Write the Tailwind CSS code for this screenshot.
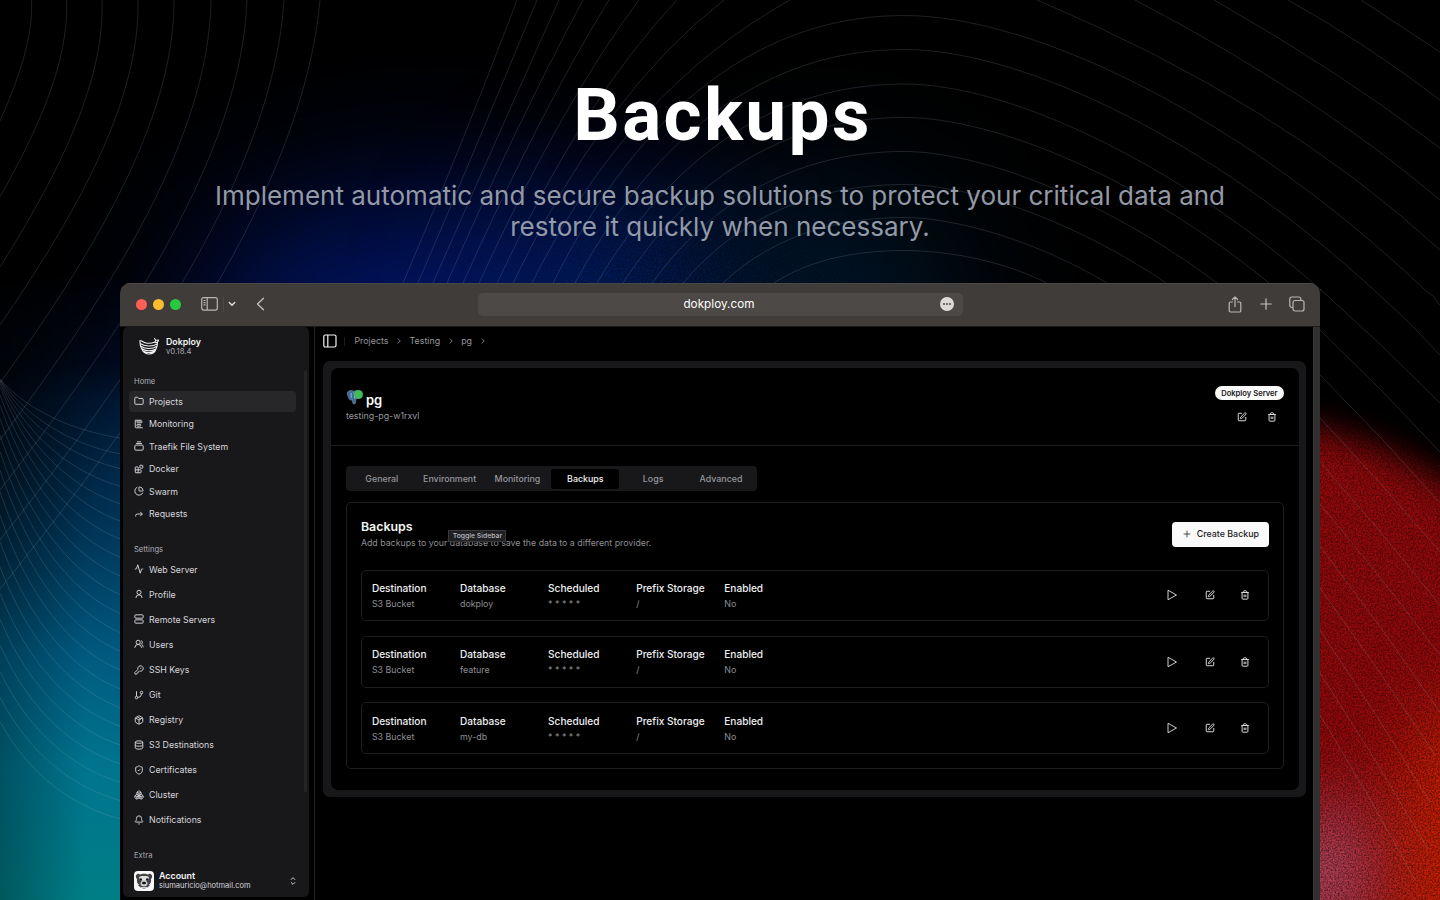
<!DOCTYPE html>
<html lang="en">
<head>
<meta charset="utf-8">
<title>Dokploy Backups</title>
<script src="https://cdn.jsdelivr.net/npm/@tailwindcss/browser@4"></script>
</head>
<body class="w-[1440px] h-[900px] overflow-hidden bg-black font-['Inter',sans-serif] text-white">
<svg width="0" height="0" class="absolute">
<defs>
<symbol id="folder" viewBox="0 0 24 24"><path d="M20 20a2 2 0 0 0 2-2V8a2 2 0 0 0-2-2h-7.9a2 2 0 0 1-1.69-.9L9.6 3.9A2 2 0 0 0 7.930 3H4a2 2 0 0 0-2 2v13a2 2 0 0 0 2 2Z"/></symbol>
<symbol id="chart" viewBox="0 0 24 24"><path d="M3 3v16a2 2 0 0 0 2 2h16M3 3h15"/><rect x="7" y="13" width="9" height="4" rx="1"/><rect x="7" y="5" width="12" height="4" rx="1"/></symbol>
<symbol id="stack" viewBox="0 0 24 24"><path d="M7 2h10M5 6h14"/><rect width="20" height="12" x="2" y="10" rx="2"/></symbol>
<symbol id="blocks" viewBox="0 0 24 24"><rect width="7" height="7" x="14" y="3" rx="1"/><path d="M10 21V8a1 1 0 0 0-1-1H4a1 1 0 0 0-1 1v12a1 1 0 0 0 1 1h12a1 1 0 0 0 1-1v-5a1 1 0 0 0-1-1H3"/></symbol>
<symbol id="pie" viewBox="0 0 24 24"><path d="M21 12c.552 0 1.005-.449.950-.998a10 10 0 0 0-8.953-8.951c-.55-.055-.998.398-.998.950v8a1 1 0 0 0 1 1z"/><path d="M21.210 15.890A10 10 0 1 1 8 2.830"/></symbol>
<symbol id="forward" viewBox="0 0 24 24"><path d="m15 17 5-5-5-5"/><path d="M4 18v-2a4 4 0 0 1 4-4h12"/></symbol>
<symbol id="activity" viewBox="0 0 24 24"><path d="M22 12h-2.480a2 2 0 0 0-1.930 1.460l-2.350 8.360a.25.25 0 0 1-.48 0L9.240 2.180a.25.25 0 0 0-.48 0l-2.350 8.360A2 2 0 0 1 4.490 12H2"/></symbol>
<symbol id="user" viewBox="0 0 24 24"><circle cx="12" cy="8" r="5"/><path d="M4.500 21.500a7.500 7.500 0 0 1 15 0"/></symbol>
<symbol id="server" viewBox="0 0 24 24"><rect width="20" height="8" x="2" y="2" rx="2"/><rect width="20" height="8" x="2" y="14" rx="2"/><path d="M6 6h.01M6 18h.01"/></symbol>
<symbol id="users" viewBox="0 0 24 24"><path d="M18 21a8 8 0 0 0-16 0"/><circle cx="10" cy="8" r="5"/><path d="M22 20c0-3.370-2-6.500-4-8a5 5 0 0 0-.45-8.300"/></symbol>
<symbol id="key" viewBox="0 0 24 24"><path d="M2.586 17.414A2 2 0 0 0 2 18.828V21a1 1 0 0 0 1 1h3a1 1 0 0 0 1-1v-1a1 1 0 0 1 1-1h1a1 1 0 0 0 1-1v-1a1 1 0 0 1 1-1h.172a2 2 0 0 0 1.414-.586l.814-.814a6.500 6.500 0 1 0-4-4z"/><circle cx="16.500" cy="7.500" r=".5"/></symbol>
<symbol id="git" viewBox="0 0 24 24"><path d="M6 3v12"/><circle cx="18" cy="6" r="3"/><circle cx="6" cy="18" r="3"/><path d="M18 9a9 9 0 0 1-9 9"/></symbol>
<symbol id="package" viewBox="0 0 24 24"><path d="M11 21.730a2 2 0 0 0 2 0l7-4A2 2 0 0 0 21 16V8a2 2 0 0 0-1-1.730l-7-4a2 2 0 0 0-2 0l-7 4A2 2 0 0 0 3 8v8a2 2 0 0 0 1 1.730zM12 22V12M3.300 7 12 12l8.700-5M7.500 4.270l9 5.150"/></symbol>
<symbol id="database" viewBox="0 0 24 24"><ellipse cx="12" cy="5" rx="9" ry="3"/><path d="M3 5v14a9 3 0 0 0 18 0V5M3 12a9 3 0 0 0 18 0"/></symbol>
<symbol id="shield" viewBox="0 0 24 24"><path d="M20 13c0 5-3.500 7.500-7.660 8.950a1 1 0 0 1-.67-.01C7.500 20.500 4 18 4 13V6a1 1 0 0 1 1-1c2 0 4.500-1.200 6.240-2.720a1.170 1.170 0 0 1 1.520 0C14.510 3.810 17 5 19 5a1 1 0 0 1 1 1z"/><path d="m9 12 2 2 4-4"/></symbol>
<symbol id="boxes" viewBox="0 0 24 24"><path d="M2.970 12.920A2 2 0 0 0 2 14.630v3.240a2 2 0 0 0 .97 1.710l3 1.800a2 2 0 0 0 2.060 0L12 19v-5.500l-5-3zM7 16.500l-4.740-2.850M7 16.500l5-3M7 16.500v5.170M12 13.500V19l3.970 2.380a2 2 0 0 0 2.060 0l3-1.800a2 2 0 0 0 .97-1.710v-3.240a2 2 0 0 0-.97-1.710L17 10.500zM17 16.500l-5-3M17 16.500l4.740-2.850M17 16.500v5.170M7.970 4.420A2 2 0 0 0 7 6.130v4.370l5 3 5-3V6.130a2 2 0 0 0-.97-1.710l-3-1.800a2 2 0 0 0-2.060 0zM12 8 7.260 5.150M12 8l4.740-2.850M12 13.500V8"/></symbol>
<symbol id="bell" viewBox="0 0 24 24"><path d="M10.268 21a2 2 0 0 0 3.464 0M3.262 15.326A1 1 0 0 0 4 17h16a1 1 0 0 0 .74-1.673C19.410 13.956 18 12.499 18 8A6 6 0 0 0 6 8c0 4.499-1.411 5.956-2.738 7.326"/></symbol>
<symbol id="chev" viewBox="0 0 24 24"><path d="m9 18 6-6-6-6"/></symbol>
<symbol id="updown" viewBox="0 0 24 24"><path d="m7 15 5 5 5-5M7 9l5-5 5 5"/></symbol>
<symbol id="edit" viewBox="0 0 24 24"><path d="M12 3H5a2 2 0 0 0-2 2v14a2 2 0 0 0 2 2h14a2 2 0 0 0 2-2v-7"/><path d="M18.375 2.625a1 1 0 0 1 3 3l-9.013 9.014a2 2 0 0 1-.853.505l-2.873.84a.5.5 0 0 1-.62-.62l.84-2.873a2 2 0 0 1 .506-.852z"/></symbol>
<symbol id="trash" viewBox="0 0 24 24"><path d="M3 6h18M19 6v14a2 2 0 0 1-2 2H7a2 2 0 0 1-2-2V6M8 6V4a2 2 0 0 1 2-2h4a2 2 0 0 1 2 2v2M10 11v6M14 11v6"/></symbol>
<symbol id="play" viewBox="0 0 24 24"><path d="M4 2.500 21 12 4 21.500z"/></symbol>
<symbol id="plus" viewBox="0 0 24 24"><path d="M4 12h16M12 4v16"/></symbol>
</defs>
</svg>

<!-- Backdrop: colour glows, grain and contour lines -->
<svg class="absolute inset-0" width="1440" height="900" viewBox="0 0 1440 900">
<defs>
<filter id="b60" x="-100%" y="-150%" width="300%" height="400%" color-interpolation-filters="sRGB"><feGaussianBlur stdDeviation="76"/></filter>
<filter id="b30" x="-100%" y="-100%" width="300%" height="300%" color-interpolation-filters="sRGB"><feGaussianBlur stdDeviation="36"/></filter>
<filter id="b14" x="-50%" y="-50%" width="200%" height="200%" color-interpolation-filters="sRGB"><feGaussianBlur stdDeviation="17"/></filter>
<filter id="grain" x="0" y="0" width="100%" height="100%" color-interpolation-filters="sRGB"><feTurbulence type="fractalNoise" baseFrequency="0.6" numOctaves="3" seed="4"/><feColorMatrix values="0 0 0 0 0  0 0 0 0 0  0 0 0 0 0  2 0 0 0 -0.62"/></filter>
<linearGradient id="teal" x1="0" y1="360" x2="0" y2="900" gradientUnits="userSpaceOnUse"><stop offset="0" stop-color="#000d26"/><stop offset=".3" stop-color="#00365a"/><stop offset=".55" stop-color="#005a80"/><stop offset=".75" stop-color="#00748e"/><stop offset="1" stop-color="#007e86"/></linearGradient>
<linearGradient id="tealv" x1="0" x2="1"><stop offset="0" stop-color="#000" stop-opacity=".3"/><stop offset=".7" stop-color="#000" stop-opacity="0"/></linearGradient>
<linearGradient id="tealt" x1="0" x2="1"><stop offset="0" stop-color="#000" stop-opacity=".55"/><stop offset="1" stop-color="#000" stop-opacity="0"/></linearGradient>
<linearGradient id="tealm" x1="0" y1="270" x2="0" y2="400" gradientUnits="userSpaceOnUse"><stop offset="0" stop-color="#000"/><stop offset="1" stop-color="#fff"/></linearGradient>
<linearGradient id="tealn" x1="0" y1="400" x2="0" y2="650" gradientUnits="userSpaceOnUse"><stop offset="0" stop-color="#fff"/><stop offset="1" stop-color="#000"/></linearGradient>
<mask id="mt"><rect y="250" width="124" height="650" fill="url(#tealm)"/></mask>
<mask id="mn"><rect y="250" width="124" height="650" fill="url(#tealn)"/></mask>
<radialGradient id="gm"><stop offset="0" stop-color="#fff"/><stop offset="1" stop-color="#000"/></radialGradient>
<mask id="mg"><ellipse cx="680" cy="320" rx="250" ry="190" fill="url(#gm)"/></mask>
</defs>
<rect width="1440" height="900" fill="#000"/>
<ellipse cx="425" cy="335" rx="235" ry="135" fill="#001464" filter="url(#b60)"/>
<ellipse cx="640" cy="330" rx="130" ry="110" fill="#00267a" filter="url(#b60)"/>
<ellipse cx="820" cy="310" rx="130" ry="110" fill="#001a30" filter="url(#b60)"/>
<rect x="430" y="120" width="540" height="180" filter="url(#grain)" mask="url(#mg)" opacity=".7"/>
<g mask="url(#mt)"><rect y="250" width="124" height="650" fill="url(#teal)"/><rect y="250" width="124" height="650" fill="url(#tealv)"/><rect y="250" width="124" height="650" fill="url(#tealt)" mask="url(#mn)"/></g>
<path d="M1240 412 L1320 430 Q1400 448 1480 505 V980 H1240Z" fill="#960a0c" filter="url(#b14)"/>
<ellipse cx="1465" cy="890" rx="75" ry="190" fill="#d02206" filter="url(#b30)"/>
<ellipse cx="1325" cy="875" rx="40" ry="76" fill="#c05878" filter="url(#b30)"/>
<rect x="1320" y="390" width="120" height="510" filter="url(#grain)" opacity=".5"/>
<g id="contours" fill="none" stroke="#a8b8c8" stroke-opacity=".22" stroke-width=".8"></g>
</svg>

<main class="relative flex flex-col items-center h-[900px]">
  <h1 class="mt-[79px] h-[72px] leading-[72px] text-[73px] font-['Roboto',sans-serif] font-bold tracking-[2.350px] pl-[5px] whitespace-nowrap">Backups</h1>
  <p class="mt-[29px] text-[26.020px] leading-[31px] text-center text-[#9499a7] whitespace-nowrap">Implement automatic and secure backup solutions to protect your critical data and<br>restore it quickly when necessary.</p>

  <section class="mt-[41px] w-[1200px] h-[617px] shrink-0 rounded-t-[10px] overflow-hidden bg-black flex flex-col">
    <header class="h-[43px] shrink-0 bg-[#403c39] border-t border-[#4b4744] flex items-center pb-[2px]">
      <div class="flex gap-[6px] ml-[16px]"><i class="size-[11px] rounded-full bg-[#ff5f57]"></i><i class="size-[11px] rounded-full bg-[#febc2e]"></i><i class="size-[11px] rounded-full bg-[#28c840]"></i></div>
      <svg class="ml-[20px]" width="17" height="14" viewBox="0 0 17 14" fill="none" stroke="#b9b6b3" stroke-width="1.200"><rect x=".7" y=".7" width="15.600" height="12.400" rx="2"/><path d="M6.200 1v12M2.500 3.500h2M2.500 5.700h2M2.500 7.900h2"/></svg>
      <i class="w-px h-[15px] ml-[5px] bg-[#4c4845]"></i>
      <svg class="ml-[4px]" width="8" height="6" viewBox="0 0 8 6" fill="none" stroke="#dedcda" stroke-width="1.500" stroke-linecap="round" stroke-linejoin="round"><path d="m1.300 1.500 2.700 2.700 2.700-2.700"/></svg>
      <svg class="ml-[20px]" width="9" height="14" viewBox="0 0 9 14" fill="none" stroke="#c5c2c0" stroke-width="1.300" stroke-linecap="round" stroke-linejoin="round"><path d="M7.500 1.200 1.500 7l6 5.800"/></svg>
      <div class="ml-[213px] w-[485px] h-[23px] rounded-[5px] bg-[#4d4946] flex items-center justify-center relative">
        <span class="text-[11.700px] tracking-[.05px] ml-[-3px] pt-[2px]">dokploy.com</span>
        <svg class="absolute right-[9px] top-[4.500px]" width="14" height="14" viewBox="0 0 14 14"><circle cx="7" cy="7" r="7" fill="#dddbd9"/><g fill="#4d4946"><circle cx="4" cy="7" r="1"/><circle cx="7" cy="7" r="1"/><circle cx="10" cy="7" r="1"/></g></svg>
      </div>
      <div class="ml-auto mr-[15px] flex items-center gap-[17.500px]">
        <svg width="14" height="17" viewBox="0 0 14 17" fill="none" stroke="#bab7b4" stroke-width="1.200" stroke-linecap="round" stroke-linejoin="round"><path d="M4.500 6H2.400a1.200 1.200 0 0 0-1.200 1.200v7.600A1.200 1.200 0 0 0 2.400 16h9.200a1.200 1.200 0 0 0 1.200-1.200V7.200A1.200 1.200 0 0 0 11.600 6H9.500M7 10.500V1M4.300 3.500 7 .9l2.700 2.600"/></svg>
        <svg width="12" height="12" viewBox="0 0 12 12" fill="none" stroke="#c5c2c0" stroke-width="1.200" stroke-linecap="round"><path d="M6 .8v10.400M.8 6h10.400"/></svg>
        <svg width="16" height="16" viewBox="0 0 16 16" fill="none" stroke="#bab7b4" stroke-width="1.200"><rect x="4" y="4.500" width="11" height="10.500" rx="2"/><path d="M4 11.500H2.800A2 2 0 0 1 .8 9.500V3a2 2 0 0 1 2-2h7a2 2 0 0 1 2 2v1.500"/></svg>
      </div>
    </header>

    <div class="flex flex-1 min-h-0 border-t border-[#1a1a1b]">
      <aside class="ml-[3px] w-[186px] h-[570px] rounded-[5px] bg-[#18181b] flex flex-col text-[#d6d6da] relative">
        <div class="flex items-center h-[39px] pl-[16px] gap-[6px]">
          <svg width="21" height="18" viewBox="0 0 42 36" fill="none" stroke="#f2f2f2" stroke-width="2.200" stroke-linecap="round" stroke-linejoin="round"><path d="M2 5c4 0 6 4 12 5 6 1 13 0 18-2 0-3 2-4 7-4-1 4-3 6-7 5M2 5c-.5 8 1 13 4 18 3 6 8 9 14 9s12-4 14-10c2-4 3-8 3-13M2.500 11c8 6 24 7 34 1M3 16c8 6 23 7 32 1M5 21c8 6 20 6 29 1M8 26c6 4 17 4 23 0M31 1l3 4"/></svg>
          <div class="leading-[10px] pt-px"><div class="text-[8.800px] font-semibold text-[#f4f4f5]">Dokploy</div><div class="text-[7.700px] text-[#a5a5aa]">v0.18.4</div></div>
        </div>
        <div class="mt-[6px] h-[20px] pl-[11px] flex items-center text-[7.600px] text-[#b0b0b5]">Home</div>
        <nav id="home" class="-mt-[1.900px] text-[8.800px] flex flex-col"></nav>
        <div class="mt-[14.900px] h-[20px] pl-[11px] flex items-center text-[7.600px] text-[#b0b0b5]">Settings</div>
        <nav id="settings" class="-mt-[3.200px] text-[8.800px] flex flex-col"></nav>
        <div class="mt-[13.200px] h-[20px] pl-[11px] flex items-center text-[7.600px] text-[#a5a5aa]">Extra</div>
        <div class="mt-[4.300px] flex items-center h-[22px] pl-[11px] pr-[11px]">
          <svg width="20" height="20" viewBox="0 0 20 20"><rect width="20" height="20" rx="4" fill="#f7f7f7"/><path d="M2 4.500c1-2 3-2 4-1 2-1 6-1 8 0 1-1 3-1 4 1 .5 2-.5 3-1 3.500.5 5-2 9-7 9.500-5-.5-7.500-4.500-7-9.500-.5-.5-1.500-1.500-1-3.500z" fill="#444"/><path d="M5 6.500c1.500-2 3-1.500 5-1.500s3.500-.5 5 1.500l-1 3-4 .5-4-.5z" fill="#ddd"/><circle cx="6.800" cy="8.500" r="1.200" fill="#111"/><circle cx="13.200" cy="8.500" r="1.200" fill="#111"/><ellipse cx="10" cy="12.500" rx="3.500" ry="3" fill="#c9c9c9"/><ellipse cx="10" cy="12" rx="2" ry="1.300" fill="#111"/><path d="M3 12l2 2M17 12l-2 2M7 16.500h6" stroke="#eee" stroke-width=".8"/></svg>
          <div class="ml-[5px] leading-[10.500px] pt-[.500px]"><div class="text-[8.900px] font-semibold text-[#f4f4f5]">Account</div><div class="text-[7.520px] text-[#d6d6da]">siumauricio@hotmail.com</div></div>
          <svg class="ml-auto size-[10px] fill-none stroke-current stroke-[2.300]"><use href="#updown"/></svg>
        </div>
        <i class="absolute right-[2px] top-[43px] w-[3px] h-[422px] bg-[#242427] rounded"></i>
      </aside>
      <div class="ml-[5px] flex-1 border-l border-[#242426] flex flex-col pl-[8.400px]">
        <div class="h-[28px] flex items-center text-[8.900px] text-[#96969c]">
          <svg width="14" height="14" viewBox="0 0 14 14" fill="none" stroke="#f4f4f5" stroke-width="1.200"><rect x=".8" y="1" width="12.200" height="12" rx="1.500"/><path d="M4.800 1v12"/></svg>
          <i class="w-px h-[9px] ml-[7px] bg-[#1c1c1e]"></i>
          <span class="ml-[9px]">Projects</span><svg class="mx-[5.500px] size-[10px] fill-none stroke-current stroke-2"><use href="#chev"/></svg>
          <span>Testing</span><svg class="mx-[5.500px] size-[10px] fill-none stroke-current stroke-2"><use href="#chev"/></svg>
          <span>pg</span><svg class="mx-[5.500px] size-[10px] fill-none stroke-current stroke-2"><use href="#chev"/></svg>
        </div>
        <div class="mt-[6px] w-[983px] h-[435.500px] rounded-[7px] bg-[#18181a] px-[7.500px] py-[7px]">
          <div class="h-full rounded-[7px] bg-black">
            <div class="h-[78px] border-b border-[#1d1d1f] flex justify-between px-[15px]">
              <div class="pt-[22px]">
                <div class="flex h-[20px]">
                  <div class="relative w-[20px]"><svg width="15" height="15" viewBox="0 0 14 15"><path d="M1.200 2C3-.2 6 .6 7 1.200c2-1 5-.6 5.400 1.600.3 2-1 4.500-1.400 5.500-1 1-1.500.5-1.700.9 0 1.500 0 3.300-.6 4.300C8 14.300 6.500 14 6.200 13L6 9.500c-.8.600-1.700 1-2.400.4C1.800 8 0 4 1.200 2z" fill="#3e6a99" stroke="#8aa3bf" stroke-width=".5"/><path d="M4.800 3c-.5 2 .2 3.500-.2 5M7 2.500c1 1 1.200 3 .8 6" stroke="#c9d6e4" stroke-width=".7" fill="none"/></svg><i class="absolute left-[8.500px] top-0 size-[9px] rounded-full bg-[#3fbb57]"></i></div>
                  <span class="text-[13px] leading-[20px] font-semibold">pg</span>
                </div>
                <div class="text-[8.850px] leading-[12px] text-[#96969c]">testing-pg-w1rxvl</div>
              </div>
              <div class="pt-[18.400px] flex flex-col items-end">
                <span class="h-[14px] w-[69px] rounded-full bg-[#fafafa] text-[#18181b] text-[7.600px] font-semibold flex items-center justify-center">Dokploy Server</span>
                <div class="flex gap-[20px] mt-[12px] mr-[7px] text-[#e4e4e7]"><svg class="size-[10px] fill-none stroke-current stroke-[2.300]"><use href="#edit"/></svg><svg class="size-[10px] fill-none stroke-current stroke-[2.300]"><use href="#trash"/></svg></div>
              </div>
            </div>
            <div class="px-[15px] pt-[20px]">
              <div class="w-[411px] h-[25px] rounded-[4px] bg-[#18181a] px-[2px] py-[2.500px] grid grid-cols-6 text-[8.850px] font-medium text-[#96969c] text-center leading-[20px]">
                <span>General</span><span>Environment</span><span>Monitoring</span><span class="bg-black rounded-[3px] text-[#f4f4f5]">Backups</span><span>Logs</span><span>Advanced</span>
              </div>
              <div class="mt-[11px] h-[267px] rounded-[5px] border border-[#1e1e20] px-[14px] relative">
                <div class="flex justify-between h-[66.500px]">
                  <div><h2 class="mt-[15.500px] text-[12.400px] leading-[16px] font-semibold text-[#f4f4f5]">Backups</h2><p class="mt-[2.500px] text-[8.800px] leading-[12px] text-[#8e8e94]">Add backups to your database to save the data to a different provider.</p></div>
                  <button class="mt-[18.500px] w-[97px] h-[25px] rounded-[4px] bg-[#fafafa] text-[#18181b] text-[8.850px] font-medium flex items-center justify-center gap-[5px]"><svg class="size-[10px] fill-none stroke-current stroke-[1.800]"><use href="#plus"/></svg>Create Backup</button>
                </div>
                <div id="rows" class="flex flex-col gap-[14.700px]"></div>
                <span class="absolute left-[101.500px] top-[27px] w-[58px] h-[12px] border border-[#3a3a3c] bg-[#202022] text-[#bdbdc0] text-[6.850px] leading-[10px] font-medium text-center whitespace-nowrap">Toggle Sidebar</span>
              </div>
            </div>
          </div>
        </div>
      </div>
      <i class="w-[7.500px] bg-[#2f2f30] border-l border-[#3a3a3b]"></i>
    </div>
  </section>
</main>

<script>
const nav = (id, items, h) => document.getElementById(id).innerHTML = items.map(([icon, label], i) =>
  `<a class="${h} flex items-center px-[6px]"><span class="flex items-center gap-[5px] w-[167px] h-[20.500px] pl-[5px] rounded-[4px] ${id === 'home' && i === 0 ? 'bg-[#27272a]' : ''}"><svg class="size-[10px] fill-none stroke-current stroke-[2.300]"><use href="#${icon}"/></svg>${label}</span></a>`).join('');
nav('home', [['folder','Projects'],['chart','Monitoring'],['stack','Traefik File System'],['blocks','Docker'],['pie','Swarm'],['forward','Requests']], 'h-[22.500px]');
nav('settings', [['activity','Web Server'],['user','Profile'],['server','Remote Servers'],['users','Users'],['key','SSH Keys'],['git','Git'],['package','Registry'],['database','S3 Destinations'],['shield','Certificates'],['boxes','Cluster'],['bell','Notifications']], 'h-[25.050px]');
document.getElementById('rows').innerHTML = ['dokploy','feature','my-db'].map(db =>
  `<div class="h-[51.700px] rounded-[5px] border border-[#1e1e20] flex items-center pl-[10px] pr-[17.500px]">` +
  [['Destination','S3 Bucket'],['Database',db],['Scheduled','* * * * *'],['Prefix Storage','/'],['Enabled','No']].map(([a, b]) =>
    `<div class="w-[88.100px] pt-[1px] whitespace-nowrap"><div class="text-[10.100px] leading-[16px] font-medium text-[#f0f0f2]">${a}</div><div class="text-[8.850px] leading-[16px] text-[#8e8e94]">${b}</div></div>`).join('') +
  `<div class="ml-auto flex items-center text-[#e4e4e7]"><svg class="size-[12px] fill-none stroke-current stroke-[1.800]"><use href="#play"/></svg><svg class="ml-[27.500px] size-[10px] fill-none stroke-current stroke-[2.300]"><use href="#edit"/></svg><svg class="ml-[25px] size-[10px] fill-none stroke-current stroke-[2.300]"><use href="#trash"/></svg></div></div>`).join('');

const d = [];
// Curves bending down to the left edge: [x at the top, y at the left edge]
[[31.5,121],[66.5,197],[102,267],[138,325],[174,383],[211,440],[247,490],[284,540],[320,589]].forEach(([t, b], i) =>
  d.push(`M${t} 0C${t * (1.06 - .014 * i)} ${b * .32} ${t * (.54 - .008 * i)} ${b * .68} 0 ${b}`));
// Arches around x = 904: [left x, apex y, right x, right y, slope]
[[774,250.5,1047,283,.5],[723,217.5,1107,283,.6],[683,184.5,1166,283,.68],[652,151.5,1217,283,.75],[623,117.5,1269,283,.82],[597,84,1321,290,.88],[575,49.5,1374,290,.92],[553,15.5,1425,290,.95]].forEach(([l, a, r, y, s]) => {
  const W = 904 - l, H = 283 - a, R = r - 904;
  d.push(`M${l} 283C${l + .29 * W} ${283 - .76 * H} ${904 - .34 * W} ${a} 904 ${a}C${904 + .25 * R} ${a} ${r - .35 * R} ${y - s * .35 * R} ${r} ${y}`);
});
// Outer arches leaving through the top edge: [bottom x, control x, control y, top x]
[[532,628,90,790],[513,604,93,724],[497,584,98,677],[479,562,103,639],[463,541,110,609],[447,517,123,583],[433,499,133,559],[418,480,138,537],[403,465,138,517]].forEach(([b, cx, cy, t]) =>
  d.push(`M${b} 283Q${cx} ${cy} ${t} 0`));
d.push('M1037 0Q1279 102 1440 250', 'M1135 0Q1315 94 1440 200', 'M1214 0Q1341 72 1440 148', 'M1288 0Q1370 46 1440 100', 'M1361 0L1440 52');
// Right side beside the window
[[1425,290,1440,305],[1374,290,1440,355],[1320,289,1440,403],[1320,330,1440,452],[1320,375,1440,503],[1320,418,1440,552],[1320,462,1440,605],[1320,504,1440,655],[1320,546,1440,712],[1320,588,1435,755],[1320,630,1430,802],[1320,673,1428,849],[1320,715,1415,880]].forEach(([a, b, c, e]) =>
  d.push(`M${a} ${b}Q${(a + c) / 2 + 2} ${(b + e) / 2 - 2} ${c} ${e}`));
// Fan on the left
const y0 = [58,58,60,64,70,80,105,135,175,225,275,330,395,465,545,620,700,778,855,935,1012,1085];
const y1 = [235,283,327,380,433,485,539,594,650,706,763,820,876,932,989,1045,1101,1157,1213,1268,1323,1378];
y1.forEach((v, i) => { const a = 360 + y0[i] / 3, b = 360 + v / 3, h = b - a; d.push(`M0 ${a}C30 ${a + h * .56} 75 ${a + h * .88} 122 ${b}`); });
document.getElementById('contours').innerHTML = d.map(p => `<path d="${p}"/>`).join('');
</script>
</body>
</html>
